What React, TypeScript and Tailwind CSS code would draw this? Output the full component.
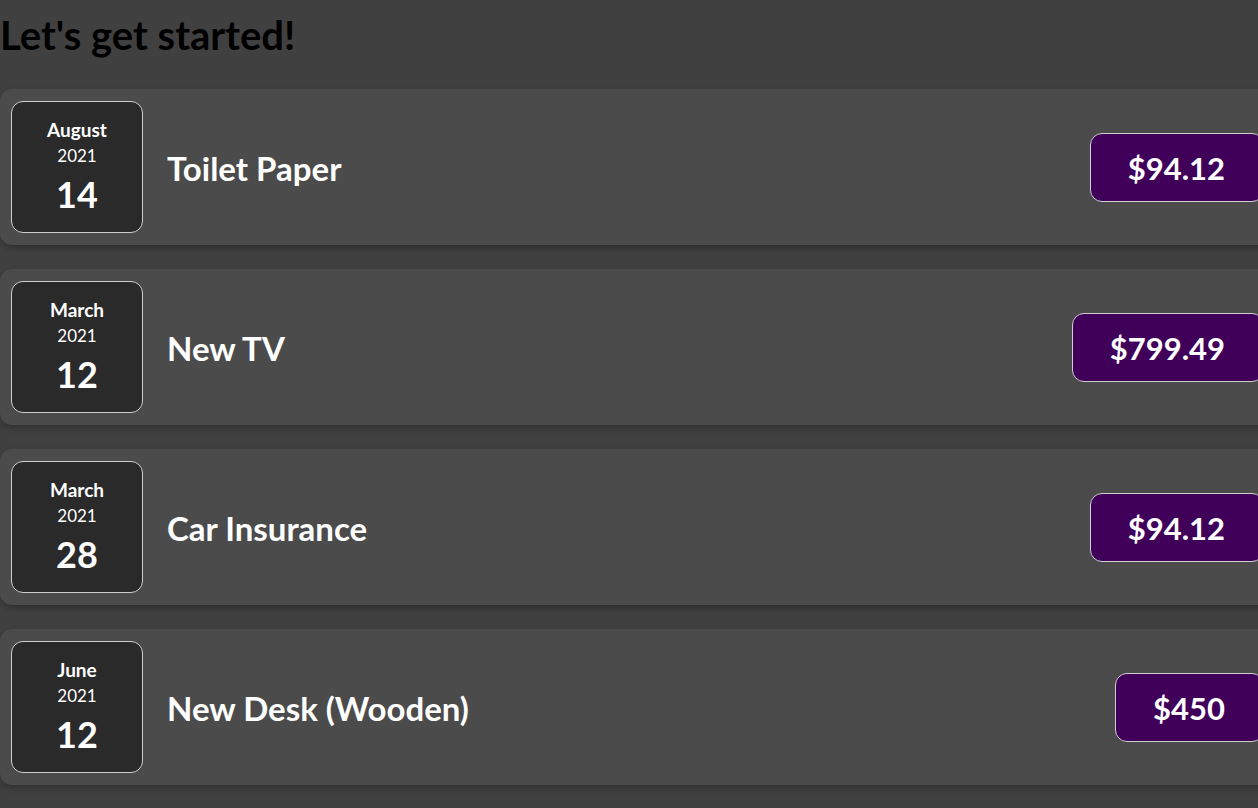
import React from 'react';

interface Expense {
  month: string;
  year: string;
  day: string;
  title: string;
  amount: string;
}

const EXPENSES: Expense[] = [
  { month: 'August', year: '2021', day: '14', title: 'Toilet Paper', amount: '$94.12' },
  { month: 'March', year: '2021', day: '12', title: 'New TV', amount: '$799.49' },
  { month: 'March', year: '2021', day: '28', title: 'Car Insurance', amount: '$94.12' },
  { month: 'June', year: '2021', day: '12', title: 'New Desk (Wooden)', amount: '$450' },
];

const ExpenseDate: React.FC<{ month: string; year: string; day: string }> = ({ month, year, day }) => (
  <div className="shrink-0 w-[132px] h-[132px] rounded-xl border border-[#cfcfcf] bg-[#2a2a2a] text-white flex flex-col items-center justify-center">
    <div className="text-[19px] font-bold leading-none -mt-[3px]">{month}</div>
    <div className="text-[17px] leading-none mt-[8px]">{year}</div>
    <div className="text-[36px] font-bold leading-none mt-[12px]">{day}</div>
  </div>
);

export default function App() {
  return (
    <div className="min-h-[808px] w-[1258px] overflow-hidden bg-[#404040] font-['Lato','Liberation_Sans',sans-serif]">
      <h1 className="text-[40px] font-bold text-black leading-none pt-[15px] pb-[34px]">Let's get started!</h1>

      <div className="flex flex-col gap-6 w-[1276px]">
        {EXPENSES.map((e, idx) => (
          <div
            key={idx}
            className="flex items-center gap-6 pl-[11px] pr-3 py-3 rounded-xl bg-[#4b4b4b] shadow-[0_3px_6px_rgba(0,0,0,0.25)]"
          >
            <ExpenseDate month={e.month} year={e.year} day={e.day} />
            <h2 className="flex-1 text-[33px] font-bold text-white mt-[3px]">{e.title}</h2>
            <div className="h-[69px] pl-[37px] pr-[38px] pt-[2px] flex items-center rounded-xl border border-[#d0d0d0] bg-[#40005a] text-white text-[31px] font-bold">
              {e.amount}
            </div>
          </div>
        ))}
      </div>
    </div>
  );
}
